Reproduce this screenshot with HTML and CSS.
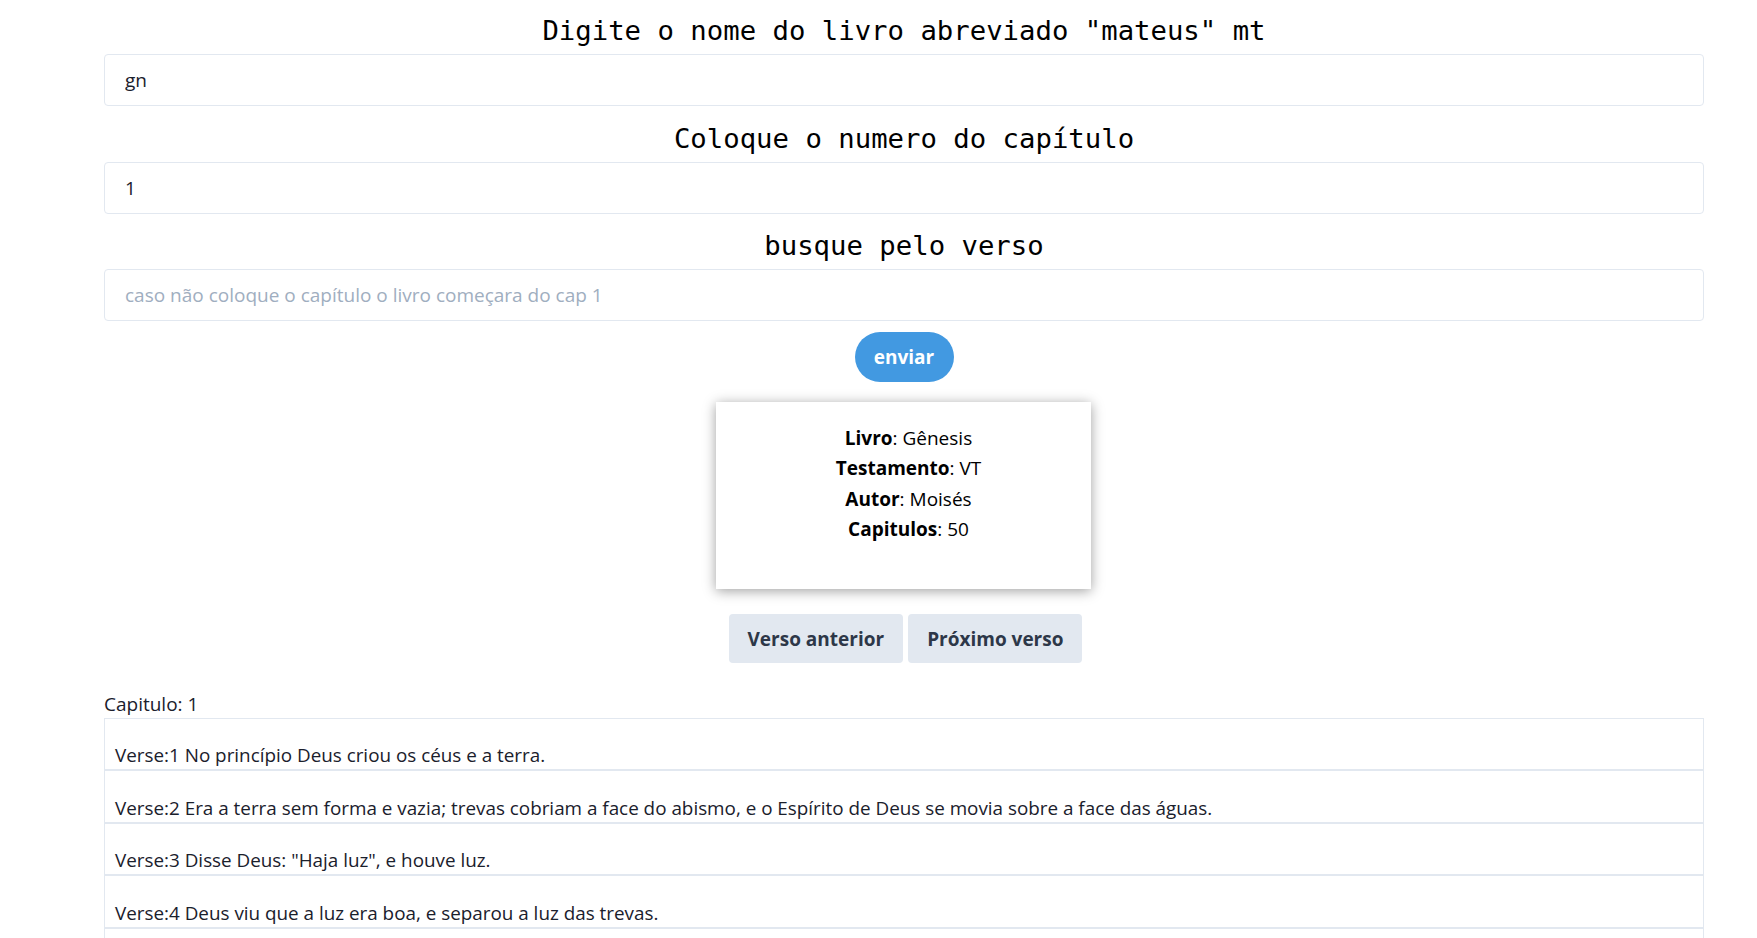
FILE: index.html
```html
<!DOCTYPE html>
<html lang="pt">
<head>
<meta charset="utf-8">
<title>Bíblia</title>
<link rel="stylesheet" href="styles.css">
</head>
<body>
<main class="page">
  <section class="field">
    <h2 class="field-title">Digite o nome do livro abreviado "mateus" mt</h2>
    <input class="field-input" type="text" value="gn">
  </section>
  <section class="field">
    <h2 class="field-title">Coloque o numero do capítulo</h2>
    <input class="field-input" type="text" value="1">
  </section>
  <section class="field">
    <h2 class="field-title">busque pelo verso</h2>
    <input class="field-input" type="text" placeholder="caso não coloque o capítulo o livro começara do cap 1">
  </section>
  <div class="submit-row">
    <button class="btn-send" type="button">enviar</button>
  </div>
  <div class="card-row">
    <div class="book-card">
      <p><b>Livro</b>: Gênesis</p>
      <p><b>Testamento</b>: VT</p>
      <p><b>Autor</b>: Moisés</p>
      <p><b>Capitulos</b>: 50</p>
    </div>
  </div>
  <div class="nav-row">
    <button class="btn-nav" type="button">Verso anterior</button>
    <button class="btn-nav" type="button">Próximo verso</button>
  </div>
  <p class="chapter">Capitulo: 1</p>
  <ul class="verses">
    <li class="verse">Verse:1 No princípio Deus criou os céus e a terra.</li>
    <li class="verse">Verse:2 Era a terra sem forma e vazia; trevas cobriam a face do abismo, e o Espírito de Deus se movia sobre a face das águas.</li>
    <li class="verse">Verse:3 Disse Deus: "Haja luz", e houve luz.</li>
    <li class="verse">Verse:4 Deus viu que a luz era boa, e separou a luz das trevas.</li>
    <li class="verse verse-empty"></li>
  </ul>
</main>
</body>
</html>
```

FILE: styles.css
```css
* { box-sizing: border-box; }
html, body { margin: 0; padding: 0; background: #ffffff; }
body {
  font-family: "Open Sans", "Noto Sans", sans-serif;
  font-size: 19px;
  color: #1a202c;
  overflow: hidden;
}
.page {
  width: 1600px;
  margin-left: 104px;
  padding-top: 8px;
}
.field { margin-top: 9.5px; }
.field:first-child { margin-top: 0; }
.field-title {
  margin: 0;
  font-family: "DejaVu Sans Mono", "Liberation Mono", monospace;
  font-weight: normal;
  font-size: 27.3px;
  line-height: 46px;
  text-align: center;
  color: #000;
}
.field-input {
  display: block;
  width: 100%;
  height: 52px;
  border: 1px solid #e2e8f0;
  border-radius: 4px;
  padding: 0 20px;
  font-family: inherit;
  font-size: 19px;
  color: #1a202c;
  background: #fff;
  outline: none;
}
.field-input::placeholder { color: #a0aec0; opacity: 1; }
.submit-row {
  display: flex;
  justify-content: center;
  margin-top: 11px;
}
.btn-send {
  width: 99px;
  height: 50px;
  border: none;
  border-radius: 25px;
  background: #4299e1;
  color: #fff;
  font-family: inherit;
  font-weight: 700;
  font-size: 19px;
  padding: 0;
}
.card-row {
  display: flex;
  justify-content: center;
  margin-top: 20px;
}
.book-card {
  width: 375px;
  height: 187px;
  padding: 21px 20px 0;
  background: #fff;
  box-shadow: 0 2px 12px rgba(0, 0, 0, 0.38);
  text-align: center;
  font-size: 19px;
  color: #000;
  margin-left: -1px;
}
.book-card p {
  margin: 0;
  line-height: 30.3px;
  padding-left: 10px;
}
.book-card b { font-weight: 700; }
.nav-row {
  display: flex;
  justify-content: center;
  gap: 5px;
  margin-top: 25px;
  padding-left: 3px;
}
.btn-nav {
  height: 49px;
  padding: 0 19px;
  border: none;
  border-radius: 4px;
  background: #e2e8f0;
  color: #2d3748;
  font-family: inherit;
  font-weight: 700;
  font-size: 19px;
}
.chapter {
  margin: 28px 0 0;
  line-height: 27px;
}
.verses {
  list-style: none;
  margin: 0;
  padding: 0;
}
.verse {
  border: 1px solid #e2e8f0;
  padding: 23.4px 10px 0;
  line-height: 27px;
  font-size: 18.85px;
}
.verse-empty { height: 53px; }
```
